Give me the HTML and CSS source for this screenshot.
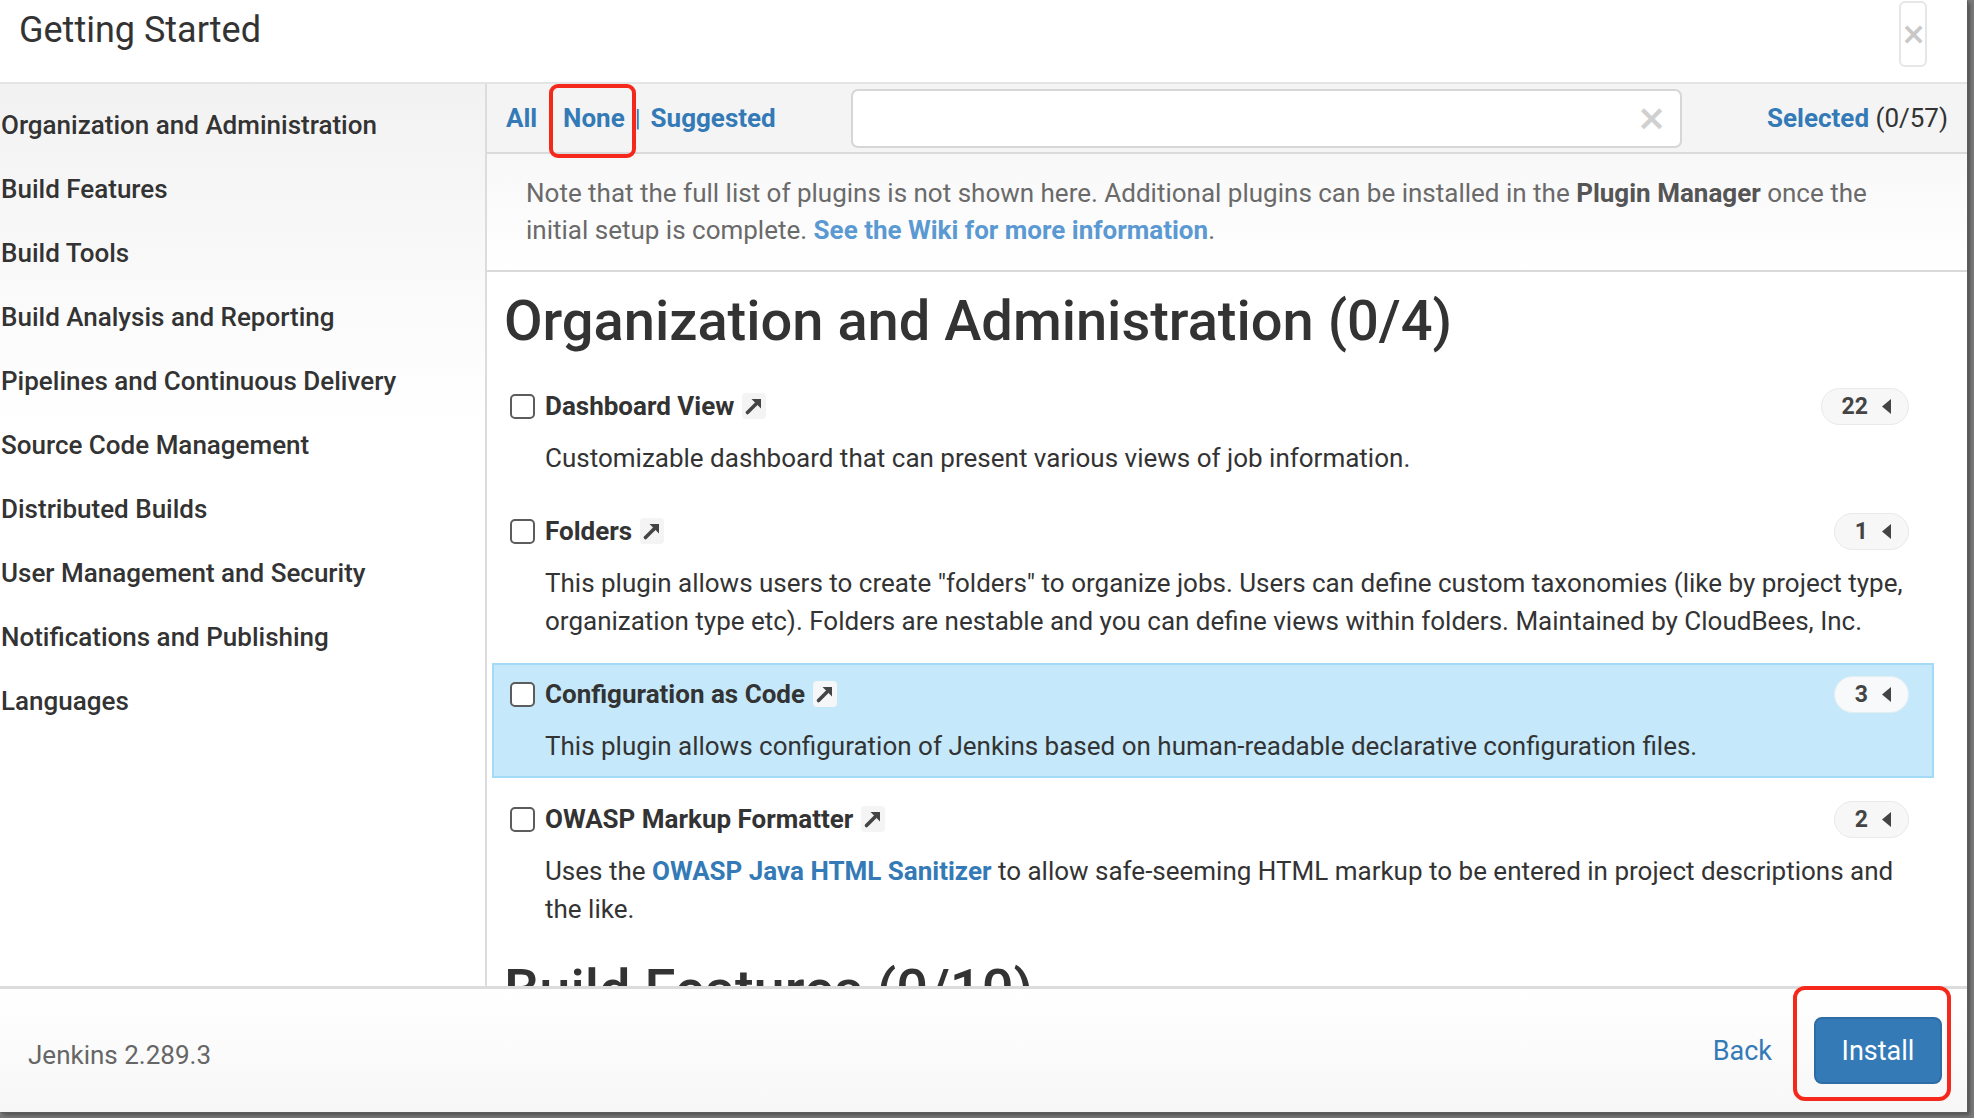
FILE: index.html
```html
<!DOCTYPE html>
<html lang="en">
<head>
<meta charset="utf-8">
<title>Getting Started</title>
<link rel="stylesheet" href="styles.css">
</head>
<body>
<div class="modal">
  <header class="header">
    <h1 class="title">Getting Started</h1>
    <button class="close" type="button">&times;</button>
  </header>
  <div class="body">
    <nav class="sidebar">
      <a class="cat-link">Organization and Administration</a>
      <a class="cat-link">Build Features</a>
      <a class="cat-link">Build Tools</a>
      <a class="cat-link">Build Analysis and Reporting</a>
      <a class="cat-link">Pipelines and Continuous Delivery</a>
      <a class="cat-link">Source Code Management</a>
      <a class="cat-link">Distributed Builds</a>
      <a class="cat-link">User Management and Security</a>
      <a class="cat-link">Notifications and Publishing</a>
      <a class="cat-link">Languages</a>
    </nav>
    <main class="main">
      <div class="toolbar">
        <div class="filters">
          <a class="flt">All</a><span class="sep">|</span><a class="flt flt-none">None</a><span class="sep">|</span><a class="flt">Suggested</a>
        </div>
        <div class="search">
          <input class="search-input" type="text" aria-label="Filter">
          <span class="search-clear">&times;</span>
        </div>
        <div class="selected"><a class="sel-link">Selected</a> (0/57)</div>
      </div>
      <p class="note">Note that the full list of plugins is not shown here. Additional plugins can be installed in the <b class="pm">Plugin Manager</b> once the initial setup is complete. <a class="wiki">See the Wiki for more information</a>.</p>
      <div class="list">
        <h2 class="cat">Organization and Administration (0/4)</h2>

        <div class="plugin">
          <div class="plugin-head">
            <span class="cb"></span>
            <span class="pname">Dashboard View</span>
            <span class="ext"><svg width="24" height="24" viewBox="0 0 24 24"><path d="M5.5 18.5 L14 10" stroke="#444" stroke-width="3.6" stroke-linecap="round"/><path d="M9.5 5 H19 V14.5 Z" fill="#444"/></svg></span>
            <span class="badge">22<svg class="tri" width="9" height="15" viewBox="0 0 9 15"><path d="M9 0 V15 L0 7.5 Z" fill="#444"/></svg></span>
          </div>
          <div class="desc">Customizable dashboard that can present various views of job information.</div>
        </div>

        <div class="plugin">
          <div class="plugin-head">
            <span class="cb"></span>
            <span class="pname">Folders</span>
            <span class="ext"><svg width="24" height="24" viewBox="0 0 24 24"><path d="M5.5 18.5 L14 10" stroke="#444" stroke-width="3.6" stroke-linecap="round"/><path d="M9.5 5 H19 V14.5 Z" fill="#444"/></svg></span>
            <span class="badge">1<svg class="tri" width="9" height="15" viewBox="0 0 9 15"><path d="M9 0 V15 L0 7.5 Z" fill="#444"/></svg></span>
          </div>
          <div class="desc">This plugin allows users to create "folders" to organize jobs. Users can define custom taxonomies (like by project type, organization type etc). Folders are nestable and you can define views within folders. Maintained by CloudBees, Inc.</div>
        </div>

        <div class="plugin plugin-hover">
          <div class="plugin-head">
            <span class="cb"></span>
            <span class="pname">Configuration as Code</span>
            <span class="ext ext-white"><svg width="24" height="24" viewBox="0 0 24 24"><path d="M5.5 18.5 L14 10" stroke="#444" stroke-width="3.6" stroke-linecap="round"/><path d="M9.5 5 H19 V14.5 Z" fill="#444"/></svg></span>
            <span class="badge badge-white">3<svg class="tri" width="9" height="15" viewBox="0 0 9 15"><path d="M9 0 V15 L0 7.5 Z" fill="#444"/></svg></span>
          </div>
          <div class="desc">This plugin allows configuration of Jenkins based on human-readable declarative configuration files.</div>
        </div>

        <div class="plugin">
          <div class="plugin-head">
            <span class="cb"></span>
            <span class="pname">OWASP Markup Formatter</span>
            <span class="ext"><svg width="24" height="24" viewBox="0 0 24 24"><path d="M5.5 18.5 L14 10" stroke="#444" stroke-width="3.6" stroke-linecap="round"/><path d="M9.5 5 H19 V14.5 Z" fill="#444"/></svg></span>
            <span class="badge">2<svg class="tri" width="9" height="15" viewBox="0 0 9 15"><path d="M9 0 V15 L0 7.5 Z" fill="#444"/></svg></span>
          </div>
          <div class="desc">Uses the <a class="desc-link">OWASP Java HTML Sanitizer</a> to allow safe-seeming HTML markup to be entered in project descriptions and the like.</div>
        </div>

        <h2 class="cat">Build Features (0/10)</h2>
      </div>
    </main>
  </div>
  <footer class="footer">
    <span class="version">Jenkins 2.289.3</span>
    <a class="back">Back</a>
    <button class="install" type="button">Install</button>
  </footer>
</div>
</body>
</html>
```

FILE: styles.css
```css
* { box-sizing: border-box; }
html, body { margin: 0; padding: 0; }
body {
  width: 1974px;
  height: 1118px;
  overflow: hidden;
  background: #7a7a7a;
  font-family: Roboto, "Liberation Sans", sans-serif;
  color: #333;
}
.modal {
  width: 1967px;
  height: 1112px;
  background: #fff;
  display: flex;
  flex-direction: column;
  box-shadow: 1px 1px 0 #5c5c5c, 3px 3px 4px rgba(0,0,0,.35);
  overflow: hidden;
}

/* header */
.header {
  height: 84px;
  flex: none;
  display: flex;
  justify-content: space-between;
  align-items: flex-start;
  border-bottom: 2px solid #e4e4e4;
  padding: 0 40px 0 19px;
}
.title {
  margin: 0;
  font-size: 36px;
  font-weight: 400;
  line-height: 60px;
  color: #333;
}
.close {
  margin-top: 1px;
  width: 28px;
  height: 66px;
  padding: 0;
  border: 2px solid #e6e6e6;
  border-radius: 6px;
  background: #fff;
  color: #c8c8c8;
  font-family: "DejaVu Sans", sans-serif;
  font-size: 30px;
  font-weight: 700;
  line-height: 1;
}

/* body */
.body {
  flex: 1;
  display: flex;
  min-height: 0;
}
.sidebar {
  width: 487px;
  flex: none;
  border-right: 2px solid #dcdcdc;
  background: linear-gradient(#f2f2f2, #fff 340px);
  padding-top: 9px;
}
.cat-link {
  display: block;
  font-size: 26px;
  font-weight: 500;
  line-height: 64px;
  padding-left: 1px;
  color: #333;
  white-space: nowrap;
}

.main {
  flex: 1;
  min-width: 0;
  display: flex;
  flex-direction: column;
}
.toolbar {
  height: 70px;
  flex: none;
  display: flex;
  align-items: center;
  background: #f4f4f4;
  border-bottom: 2px solid #dadada;
  padding: 0 19px 0 19px;
}
.filters {
  display: flex;
  align-items: center;
  font-size: 26px;
  font-weight: 700;
  line-height: 30px;
  color: #337ab7;
}
.flt { color: #337ab7; }
.sep {
  font-weight: 400;
  margin: 0 10px;
  font-size: 24px;
}
.flt-none { position: relative; }
.flt-none::after {
  content: "";
  position: absolute;
  left: -14px;
  right: -11px;
  top: -19px;
  bottom: -25px;
  border: 4px solid #f5281c;
  border-radius: 9px;
}
.search {
  margin-left: 75px;
  width: 831px;
  height: 59px;
  display: flex;
  align-items: center;
  background: #fff;
  border: 2px solid #d6d6d6;
  border-radius: 7px;
  padding: 0 13px 0 12px;
}
.search-input {
  flex: 1;
  border: 0;
  outline: 0;
  background: transparent;
  font-size: 24px;
  height: 40px;
}
.search-clear {
  color: #d0d0d0;
  font-family: "DejaVu Sans", sans-serif;
  font-size: 36px;
  font-weight: 700;
  line-height: 1;
}
.selected {
  margin-left: auto;
  font-size: 26px;
  color: #333;
  white-space: nowrap;
}
.sel-link { color: #337ab7; font-weight: 700; }

.note {
  margin: 0;
  flex: none;
  padding: 21px 60px 21px 39px;
  font-size: 26px;
  line-height: 37px;
  color: #6a6a6a;
  background: linear-gradient(#f8f8f8, #fff);
  border-bottom: 2px solid #dadada;
}
.pm { color: #555; }
.wiki { color: #5b99d2; font-weight: 700; }

.list {
  flex: 1;
  min-height: 0;
  overflow: hidden;
  padding: 0 33px 0 5px;
}
.cat {
  margin: 16px 0 20px;
  padding-left: 12px;
  font-size: 56px;
  font-weight: 500;
  line-height: 67px;
  color: #333;
  white-space: nowrap;
}
.plugin {
  border: 2px solid transparent;
  padding: 11px 23px 11px 16px;
  margin-bottom: 10px;
}
.plugin-hover {
  background: #c5e9fb;
  border-color: #a3daf6;
}
.plugin-head {
  display: flex;
  align-items: center;
  height: 36px;
}
.cb {
  width: 25px;
  height: 25px;
  border: 2px solid #5c5c5c;
  border-radius: 5px;
  background: #fff;
  margin-right: 10px;
  flex: none;
}
.pname {
  font-size: 26px;
  font-weight: 700;
  color: #333;
}
.ext {
  width: 24px;
  height: 26px;
  margin-left: 8px;
  background: #f4f4f4;
  border-radius: 4px;
  display: flex;
  align-items: center;
  justify-content: center;
}
.ext-white { background: #f4f6f7; }
.badge {
  margin-left: auto;
  height: 37px;
  display: flex;
  align-items: center;
  gap: 14px;
  padding: 0 17px 0 20px;
  background: #f7f7f7;
  border: 1px solid #e9e9e9;
  border-radius: 19px;
  font-size: 23px;
  font-weight: 700;
  color: #444;
}
.badge-white { background: #f7f9fa; border-color: #e3eef3; }
.desc {
  margin-top: 15px;
  padding-left: 35px;
  font-size: 26px;
  line-height: 38px;
  color: #333;
}
.desc-link { color: #337ab7; font-weight: 700; }

/* footer */
.footer {
  height: 126px;
  flex: none;
  display: flex;
  align-items: center;
  border-top: 3px solid #dcdcdc;
  background: linear-gradient(#fff, #f7f7f7);
  padding: 0 25px 0 28px;
}
.version {
  font-size: 26px;
  color: #666;
  padding-top: 8px;
}
.back {
  margin-left: auto;
  font-size: 27px;
  color: #337ab7;
}
.install {
  position: relative;
  margin-left: 42px;
  width: 128px;
  height: 67px;
  border: 2px solid #2e6da4;
  border-radius: 8px;
  background: #337ab7;
  color: #fff;
  font-family: Roboto, "Liberation Sans", sans-serif;
  font-size: 27px;
  padding: 0;
}
.install::after {
  content: "";
  position: absolute;
  left: -23px;
  right: -11px;
  top: -33px;
  bottom: -19px;
  border: 4px solid #f5281c;
  border-radius: 12px;
}
```
